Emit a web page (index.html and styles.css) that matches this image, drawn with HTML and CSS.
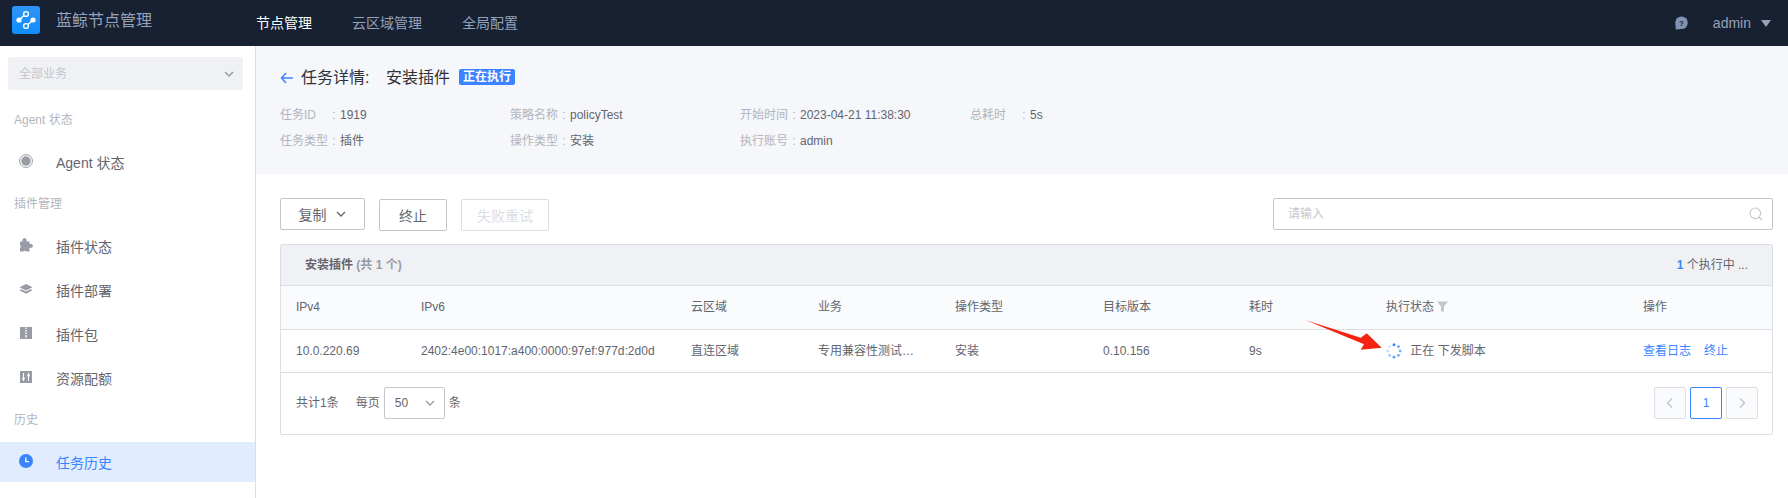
FILE: index.html
```html
<!DOCTYPE html>
<html lang="zh-CN">
<head>
    <meta charset="UTF-8">
    <title>蓝鲸节点管理</title>
    <link rel="stylesheet" href="styles.css">
</head>
<body>
    <!-- Top bar -->
    <header class="topbar">
        <div class="brand">
            <svg class="logo" width="28" height="28" viewBox="0 0 28 28">
                <defs>
                    <linearGradient id="logoBg" x1="0" y1="0" x2="0" y2="1">
                        <stop offset="0" stop-color="#2f95f7"/>
                        <stop offset="1" stop-color="#0f8dfd"/>
                    </linearGradient>
                </defs>
                <rect width="28" height="28" rx="3" fill="url(#logoBg)"/>
                <path d="M7 14 L12 9.5 M21 14 L16 18.5" stroke="#fff" stroke-width="1.4"/>
                <circle cx="7" cy="14" r="2.6" fill="#fff"/>
                <circle cx="21" cy="14" r="2.6" fill="#fff"/>
                <circle cx="14" cy="8" r="2.4" fill="none" stroke="#fff" stroke-width="1.4"/>
                <circle cx="14" cy="20" r="2.4" fill="none" stroke="#fff" stroke-width="1.4"/>
            </svg>
            <span class="brand-name">蓝鲸节点管理</span>
        </div>
        <nav class="topnav">
            <a class="active" href="#">节点管理</a>
            <a href="#">云区域管理</a>
            <a href="#">全局配置</a>
        </nav>
        <div class="user">
            <svg class="help" width="13" height="14" viewBox="0 0 13 14">
                <circle cx="6.5" cy="6.8" r="6.3" fill="#7f94b5"/>
                <path d="M.6 8 V12.500 Q.6 13.800 2 13.500 L6 13z" fill="#7f94b5"/>
                <text x="6.5" y="10" text-anchor="middle" class="help-mark">?</text>
            </svg>
            <span class="user-name">admin</span>
            <span class="caret"></span>
        </div>
    </header>

    <div class="layout">
        <!-- Sidebar -->
        <aside class="sidebar">
            <div class="biz-select">
                <span>全部业务</span>
                <svg width="12" height="12" viewBox="0 0 12 12"><path d="M2 4 L6 8 L10 4" fill="none" stroke="#979ba5" stroke-width="1.500"/></svg>
            </div>
            <div class="side-label">Agent 状态</div>
            <a class="side-item" href="#">
                <svg width="14" height="14" viewBox="0 0 14 14"><circle cx="7" cy="7" r="6.400" fill="none" stroke="#979ba5" stroke-width="1"/><circle cx="7" cy="7" r="4.700" fill="#979ba5"/></svg>
                <span>Agent 状态</span>
            </a>
            <div class="side-label">插件管理</div>
            <a class="side-item" href="#">
                <svg width="14" height="14" viewBox="0 0 14 14"><path d="M1 3.500H3.800a2.100 2.100 0 1 1 3.400 0H10.500V6.200a2.100 2.100 0 1 1 0 3.400V13.500H7.300a1.800 1.800 0 0 0-3 0H1V10a1.800 1.800 0 0 0 0-3z" fill="#979ba5"/></svg>
                <span>插件状态</span>
            </a>
            <a class="side-item" href="#">
                <svg width="14" height="14" viewBox="0 0 14 14"><path d="M7 2 L13.500 5.200 L7 8.400 L.5 5.200z M.5 8.200 L2.400 7.300 L7 9.600 L11.600 7.300 L13.500 8.200 L7 11.800z" fill="#979ba5"/></svg>
                <span>插件部署</span>
            </a>
            <a class="side-item" href="#">
                <svg width="14" height="14" viewBox="0 0 14 14"><rect x="1" y="1" width="12" height="12" fill="#979ba5"/><path d="M6 1.500h2v1.500h-2z M6 4h2v1.500h-2z M6 6.500h2v1.500h-2z M6 9h2v2.500h-2z" fill="#e3e4e8"/></svg>
                <span>插件包</span>
            </a>
            <a class="side-item" href="#">
                <svg width="14" height="14" viewBox="0 0 14 14"><rect x="1" y="1" width="12" height="12" fill="#979ba5"/><path d="M4.500 3v8 M9.500 3v8" stroke="#fff" stroke-width="1"/><circle cx="4.500" cy="8.500" r="1.300" fill="#fff"/><circle cx="9.500" cy="5.500" r="1.300" fill="#fff"/></svg>
                <span>资源配额</span>
            </a>
            <div class="side-label">历史</div>
            <a class="side-item active" href="#">
                <svg width="14" height="14" viewBox="0 0 14 14"><circle cx="7" cy="7" r="7" fill="#3a84ff"/><path d="M6.800 3.500v4.200h3.200" fill="none" stroke="#fff" stroke-width="1.300"/></svg>
                <span>任务历史</span>
            </a>
        </aside>

        <main class="main">
            <!-- Task summary -->
            <section class="summary">
                <div class="summary-title">
                    <svg class="back" width="14" height="12" viewBox="0 0 14 12"><path d="M6 1 L1.500 6 L6 11 M1.500 6 H13" fill="none" stroke="#3a84ff" stroke-width="1.500"/></svg>
                    <span class="title-label">任务详情:</span>
                    <span class="title-name">安装插件</span>
                    <span class="tag">正在执行</span>
                </div>
                <div class="meta">
                    <div class="meta-item"><span class="meta-key">任务ID</span><span class="meta-colon">:</span><span class="meta-val">1919</span></div>
                    <div class="meta-item"><span class="meta-key">策略名称</span><span class="meta-colon">:</span><span class="meta-val">policyTest</span></div>
                    <div class="meta-item"><span class="meta-key">开始时间</span><span class="meta-colon">:</span><span class="meta-val">2023-04-21 11:38:30</span></div>
                    <div class="meta-item"><span class="meta-key">总耗时</span><span class="meta-colon">:</span><span class="meta-val">5s</span></div>
                    <div class="meta-item"><span class="meta-key">任务类型</span><span class="meta-colon">:</span><span class="meta-val">插件</span></div>
                    <div class="meta-item"><span class="meta-key">操作类型</span><span class="meta-colon">:</span><span class="meta-val">安装</span></div>
                    <div class="meta-item"><span class="meta-key">执行账号</span><span class="meta-colon">:</span><span class="meta-val">admin</span></div>
                </div>
            </section>

            <section class="content">
                <div class="toolbar">
                    <button class="btn btn-copy">复制
                        <svg width="12" height="12" viewBox="0 0 12 12"><path d="M2 4 L6 8 L10 4" fill="none" stroke="#63656e" stroke-width="1.300"/></svg>
                    </button>
                    <button class="btn btn-stop">终止</button>
                    <button class="btn btn-retry" disabled>失败重试</button>
                    <div class="search">
                        <input type="text" placeholder="请输入">
                        <svg width="14" height="14" viewBox="0 0 14 14"><circle cx="6.300" cy="6.300" r="5.300" fill="none" stroke="#c4c6cc" stroke-width="1.100"/><path d="M10 10 L13 13" stroke="#c4c6cc" stroke-width="1.100"/></svg>
                    </div>
                </div>

                <div class="panel">
                    <div class="panel-head">
                        <div class="panel-title">安装插件 <span>(共 1 个)</span></div>
                        <div class="panel-count"><b>1</b> 个执行中 ...</div>
                    </div>
                    <table class="grid">
                        <colgroup>
                            <col class="c-ipv4"><col class="c-ipv6"><col class="c-cloud"><col class="c-biz"><col class="c-op">
                            <col class="c-ver"><col class="c-time"><col class="c-status"><col>
                        </colgroup>
                        <thead>
                            <tr>
                                <th>IPv4</th>
                                <th>IPv6</th>
                                <th>云区域</th>
                                <th>业务</th>
                                <th>操作类型</th>
                                <th>目标版本</th>
                                <th>耗时</th>
                                <th>执行状态
                                    <svg class="filter" width="11" height="11" viewBox="0 0 11 11"><path d="M0 .5 H11 L7 5.500 V10.500 H4 V5.500z" fill="#c4c6cc"/></svg>
                                </th>
                                <th>操作</th>
                            </tr>
                        </thead>
                        <tbody>
                            <tr>
                                <td>10.0.220.69</td>
                                <td>2402:4e00:1017:a400:0000:97ef:977d:2d0d</td>
                                <td>直连区域</td>
                                <td>专用兼容性测试…</td>
                                <td>安装</td>
                                <td>0.10.156</td>
                                <td>9s</td>
                                <td class="status-cell">
                                    <svg class="spinner" width="16" height="16" viewBox="0 0 16 16">
                                        <circle cx="8" cy="1.800" r="1.500" fill="#3a84ff"/>
                                        <circle cx="12.400" cy="3.600" r="1.400" fill="#5c9bff"/>
                                        <circle cx="14.200" cy="8" r="1.400" fill="#7aaeff"/>
                                        <circle cx="12.400" cy="12.400" r="1.400" fill="#6fa6ff"/>
                                        <circle cx="8" cy="14.200" r="1.400" fill="#5c9bff"/>
                                        <circle cx="3.600" cy="12.400" r="1.400" fill="#a3c5ff"/>
                                        <circle cx="1.800" cy="8" r="1.400" fill="#c6dbff"/>
                                        <circle cx="3.600" cy="3.600" r="1.400" fill="#d6e5ff"/>
                                    </svg>
                                    <span>正在 下发脚本</span>
                                    <!-- red arrow annotation over the row -->
                                    <svg class="annotation" width="80" height="34" viewBox="0 0 80 34">
                                        <path d="M2 1.300 L56.700 18.700 L62.700 14.300 L77.700 28.700 L56.700 30.700 L60 25.300z" fill="#f5230f"/>
                                    </svg>
                                </td>
                                <td class="actions"><a href="#">查看日志</a><a href="#">终止</a></td>
                            </tr>
                        </tbody>
                    </table>
                    <div class="pager">
                        <div class="pager-info">
                            <span class="pager-total">共计1条</span>
                            <span>每页</span>
                            <div class="size-select">
                                <span>50</span>
                                <svg width="12" height="12" viewBox="0 0 12 12"><path d="M2 4 L6 8 L10 4" fill="none" stroke="#979ba5" stroke-width="1.300"/></svg>
                            </div>
                            <span>条</span>
                        </div>
                        <div class="pager-btns">
                            <span class="page disabled"><svg width="10" height="12" viewBox="0 0 10 12"><path d="M7 1.500 L2.500 6 L7 10.500" fill="none" stroke="#c4c6cc" stroke-width="1.500"/></svg></span>
                            <span class="page current">1</span>
                            <span class="page disabled"><svg width="10" height="12" viewBox="0 0 10 12"><path d="M3 1.500 L7.500 6 L3 10.500" fill="none" stroke="#c4c6cc" stroke-width="1.500"/></svg></span>
                        </div>
                    </div>
                </div>
            </section>
        </main>
    </div>
</body>
</html>
```

FILE: styles.css
```css
* {
    box-sizing: border-box;
}

html, body {
    height: 100%;
}

body {
    margin: 0;
    overflow: hidden;
    display: flex;
    flex-direction: column;
    font-family: "Liberation Sans", "Noto Sans CJK SC", sans-serif;
    font-size: 12px;
    line-height: 20px;
    color: #63656e;
    background-color: #fff;
}

a {
    text-decoration: none;
}

/* Top bar */
.topbar {
    height: 46px;
    flex: none;
    display: flex;
    align-items: center;
    background-color: #182132;
    color: #96a2b9;
}

.brand {
    width: 256px;
    padding-left: 12px;
    display: flex;
    align-items: center;
}

.brand-name {
    margin-left: 16px;
    font-size: 16px;
    line-height: 24px;
    margin-top: -5px;
}

.logo {
    margin-top: -6px;
}

.topnav {
    display: flex;
    gap: 40px;
    font-size: 14px;
}

.topnav a {
    color: #96a2b9;
}

.topnav a.active {
    color: #fff;
}

.user {
    margin-left: auto;
    padding-right: 17px;
    display: flex;
    align-items: center;
    font-size: 14px;
}

.help-mark {
    font-size: 8px;
    font-weight: bold;
    fill: #182132;
}

.user-name {
    margin-left: 25px;
}

.caret {
    margin-left: 10px;
    width: 0;
    height: 0;
    border-left: 5px solid transparent;
    border-right: 5px solid transparent;
    border-top: 7px solid #96a2b9;
}

.layout {
    flex: 1;
    display: flex;
    min-height: 0;
}

/* Sidebar */
.sidebar {
    width: 256px;
    flex: none;
    padding-top: 11px;
    border-right: 1px solid #dcdee5;
}

.biz-select {
    height: 33px;
    margin: 0 12px 10px 8px;
    padding: 0 8px 0 11px;
    display: flex;
    align-items: center;
    justify-content: space-between;
    background-color: #f0f1f5;
    border-radius: 2px;
    color: #c4c6cc;
}

.side-label {
    height: 40px;
    line-height: 40px;
    padding-left: 14px;
    color: #b2b5bd;
}

.side-item {
    height: 40px;
    margin: 2px 0;
    padding-left: 19px;
    display: flex;
    align-items: center;
    font-size: 14px;
    color: #63656e;
}

.side-item + .side-item {
    margin-top: 4px;
}

.side-item svg {
    margin-top: -2px;
}

.side-item span {
    margin-left: 23px;
    margin-top: 2px;
}

.side-item.active {
    background-color: #e1ecff;
    color: #3a84ff;
}

/* Main */
.main {
    flex: 1;
    min-width: 0;
}

.summary {
    height: 128px;
    padding: 22px 24px 0;
    background-color: #f5f7fb;
}

.summary-title {
    height: 20px;
    display: flex;
    align-items: center;
    font-size: 16px;
    color: #313238;
}

.back {
    margin-right: 7px;
}

.title-label {
    width: 85px;
}

.title-name {
    width: 73px;
}

.tag {
    width: 56px;
    height: 16px;
    margin-top: -2px;
    line-height: 16px;
    text-align: center;
    font-size: 12px;
    font-weight: bold;
    color: #fff;
    background-color: #3a84ff;
    border-radius: 2px;
}

.meta {
    margin-top: 14px;
    display: grid;
    grid-template-columns: repeat(4, 230px);
    grid-auto-rows: 26px;
}

.meta-item {
    display: flex;
    align-items: center;
}

.meta-key {
    width: 48px;
    color: #b2b5bd;
}

.meta-colon {
    width: 12px;
    text-align: center;
    color: #b2b5bd;
}

.content {
    padding: 24px 15px 0 24px;
}

.toolbar {
    height: 46px;
    display: flex;
    align-items: flex-start;
}

.btn {
    height: 32px;
    margin-top: 1px;
    padding: 0;
    font-family: inherit;
    font-size: 14px;
    color: #63656e;
    background-color: #fff;
    border: 1px solid #c4c6cc;
    border-radius: 2px;
}

.btn-copy {
    width: 85px;
    margin-top: 0;
    margin-right: 14px;
    display: flex;
    align-items: center;
    justify-content: center;
    gap: 8px;
}

.btn-stop {
    width: 68px;
    margin-right: 14px;
}

.btn-retry {
    width: 88px;
    color: #dcdee5;
    border-color: #dcdee5;
}

.search {
    margin-left: auto;
    width: 500px;
    height: 32px;
    position: relative;
}

.search input {
    width: 100%;
    height: 100%;
    padding: 0 32px 0 14px;
    font-family: inherit;
    font-size: 12px;
    border: 1px solid #c4c6cc;
    border-radius: 2px;
    outline: none;
}

.search input::placeholder {
    color: #c4c6cc;
}

.search svg {
    position: absolute;
    right: 10px;
    top: 9px;
}

/* Task table */
.panel {
    border: 1px solid #dcdee5;
    border-radius: 2px;
}

.panel-head {
    height: 41px;
    padding: 0 24px;
    display: flex;
    align-items: center;
    justify-content: space-between;
    background-color: #f0f1f5;
    border-bottom: 1px solid #dcdee5;
}

.panel-title {
    font-weight: bold;
    color: #63656e;
}

.panel-title span {
    color: #979ba5;
}

.panel-count b {
    color: #3a84ff;
}

.grid {
    width: 100%;
    table-layout: fixed;
    border-collapse: collapse;
}

.c-ipv4 { width: 125px; }
.c-ipv6 { width: 270px; }
.c-cloud { width: 127px; }
.c-biz { width: 137px; }
.c-op { width: 148px; }
.c-ver { width: 146px; }
.c-time { width: 137px; }
.c-status { width: 257px; }

.grid th,
.grid td {
    height: 43px;
    padding: 0 15px;
    font-weight: normal;
    text-align: left;
    white-space: nowrap;
    border-bottom: 1px solid #dcdee5;
}

.grid th {
    background-color: #fafbfd;
    color: #63656e;
}

.filter {
    vertical-align: -1px;
}

.status-cell {
    position: relative;
}

.spinner {
    vertical-align: -4px;
    margin-right: 5px;
}

.annotation {
    position: absolute;
    left: -67px;
    top: -11px;
}

.actions a {
    color: #3a84ff;
    margin-right: 13px;
}

.pager {
    height: 61px;
    padding: 0 14px 0 15px;
    display: flex;
    align-items: center;
    justify-content: space-between;
}

.pager-info {
    display: flex;
    align-items: center;
}

.pager-total {
    margin-right: 17px;
}

.size-select {
    width: 61px;
    height: 32px;
    margin: 0 4px;
    padding: 0 8px 0 10px;
    display: flex;
    align-items: center;
    justify-content: space-between;
    border: 1px solid #c4c6cc;
    border-radius: 2px;
}

.pager-btns {
    display: flex;
    gap: 4px;
}

.page {
    width: 32px;
    height: 32px;
    display: flex;
    align-items: center;
    justify-content: center;
    border: 1px solid #dcdee5;
    border-radius: 2px;
}

.page.disabled {
    background-color: #fafbfd;
}

.page.current {
    border-color: #3a84ff;
    color: #3a84ff;
}
```
